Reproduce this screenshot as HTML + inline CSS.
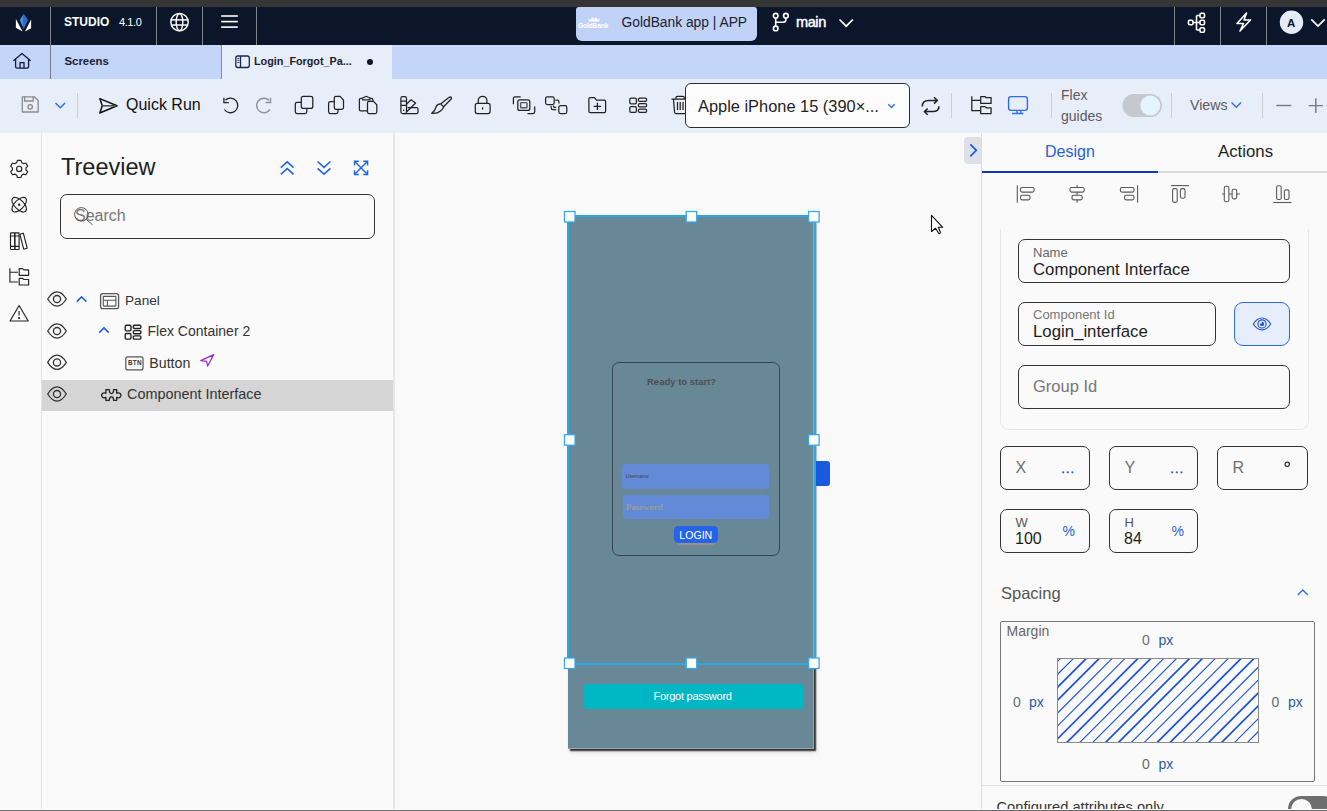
<!DOCTYPE html>
<html><head><meta charset="utf-8">
<style>
*{box-sizing:border-box;margin:0;padding:0}
html,body{width:1327px;height:811px;overflow:hidden;background:#fafafa;font-family:"Liberation Sans",sans-serif;color:#222}
.a{position:absolute}
svg{position:absolute;overflow:visible}
.t{position:absolute;white-space:nowrap;line-height:1}
</style></head><body>
<!-- browser strip -->
<div class="a" style="left:0;top:0;width:1327px;height:7px;background:#353535"></div>
<!-- nav -->
<div class="a" style="left:0;top:7px;width:1327px;height:38px;background:#0b162b"></div>
<!-- tabbar -->
<div class="a" style="left:0;top:45px;width:1327px;height:34px;background:#c3d5f8"></div>
<!-- toolbar -->
<div class="a" style="left:0;top:79px;width:1327px;height:54px;background:#e8edfa"></div>
<!-- left rail -->
<div class="a" style="left:0;top:133px;width:42px;height:677px;background:#fafafa;border-right:1px solid #e3e3e3"></div>
<!-- left panel -->
<div class="a" style="left:42px;top:133px;width:351px;height:677px;background:#fafafa"></div>
<div class="a" style="left:393px;top:133px;width:2px;height:677px;background:#e6e6e6"></div>
<!-- canvas -->
<div class="a" style="left:395px;top:133px;width:586px;height:677px;background:#f9f9fa"></div>
<!-- right panel -->
<div class="a" style="left:981px;top:133px;width:1px;height:677px;background:#dcdcdc"></div>
<div class="a" style="left:982px;top:133px;width:345px;height:677px;background:#fafafa"></div>
<!-- NAV -->
<svg width="1327" height="45" style="left:0;top:0">
  <g fill="#fff"><path d="M15.9 18.9 L15.9 27.8 L22.6 31.5 Z"/><path d="M31.1 19.6 L31.1 28.3 L25.0 31.5 Z"/></g>
  <path d="M23.7 13.7 L19.8 19.9 L23.7 28.9 Z" fill="#4b93dc"/>
  <path d="M23.7 13.7 L28.1 19.9 L23.7 28.9 Z" fill="#2c6cc2"/>
  <g stroke="#7d828b" stroke-width="1"><line x1="50.5" y1="7" x2="50.5" y2="45"/><line x1="156.5" y1="7" x2="156.5" y2="45"/><line x1="202.5" y1="7" x2="202.5" y2="45"/><line x1="256.5" y1="7" x2="256.5" y2="45"/><line x1="1174.5" y1="7" x2="1174.5" y2="45"/><line x1="1220.5" y1="7" x2="1220.5" y2="45"/><line x1="1266.5" y1="7" x2="1266.5" y2="45"/></g>
  <!-- globe -->
  <g fill="none" stroke="#fff" stroke-width="1.45"><circle cx="179.5" cy="22.1" r="8.7"/><ellipse cx="179.5" cy="22.1" rx="3.3" ry="8.7"/><line x1="171" y1="19.9" x2="188" y2="19.9"/><line x1="171" y1="25" x2="188" y2="25"/></g>
  <!-- hamburger -->
  <g stroke="#fff" stroke-width="1.6"><line x1="221.2" y1="16" x2="237.8" y2="16"/><line x1="221.2" y1="21.6" x2="237.8" y2="21.6"/><line x1="221.2" y1="27.1" x2="237.8" y2="27.1"/></g>
  <!-- branch icon -->
  <g fill="none" stroke="#fff" stroke-width="1.6"><circle cx="775.7" cy="15.7" r="2.3"/><circle cx="775.7" cy="28.4" r="2.3"/><circle cx="785.9" cy="15.7" r="2.3"/><line x1="775.7" y1="18" x2="775.7" y2="26.1"/><path d="M785.9 18 V19.5 Q785.9 22.3 783 22.3 H775.7"/></g>
  <!-- chevron main -->
  <path d="M839.5 19.5 L846.2 26.2 L852.9 19.5" fill="none" stroke="#fff" stroke-width="1.7"/>
  <!-- hierarchy -->
  <g fill="none" stroke="#fff" stroke-width="1.6"><rect x="1188.5" y="20.3" width="4.5" height="4.5" rx="1.2"/><rect x="1200" y="13.2" width="4.5" height="4.5" rx="1.2"/><rect x="1200" y="20.3" width="4.5" height="4.5" rx="1.2"/><rect x="1200" y="27.8" width="4.5" height="4.5" rx="1.2"/><path d="M1193 22.5 H1200 M1196.5 15.5 V30 M1196.5 15.5 H1200 M1196.5 30 H1200"/></g>
  <!-- lightning -->
  <path d="M1246.5 13 L1237 23.5 L1243.5 23.5 L1240 31 L1250.5 20 L1244 20 Z" fill="none" stroke="#fff" stroke-width="1.6" stroke-linejoin="round"/>
  <!-- avatar -->
  <circle cx="1291.5" cy="22.3" r="11.7" fill="#e6ebf8"/>
  <path d="M1311.3 19.3 L1318 26 L1324.7 19.3" fill="none" stroke="#fff" stroke-width="1.7"/>
</svg>
<div class="t" style="left:64px;top:16px;font-size:12px;font-weight:bold;color:#fff">STUDIO</div>
<div class="t" style="left:119px;top:16.5px;font-size:11px;color:#fff;letter-spacing:-0.4px">4.1.0</div>
<div class="a" style="left:576px;top:7px;width:181px;height:34px;background:#c0d2f6;border-radius:3px 3px 6px 6px"></div>
<div class="t" style="left:578px;top:22.8px;font-size:6.6px;font-weight:bold;color:#fff;letter-spacing:-0.1px">GoldBank</div>
<svg width="20" height="10" style="left:585px;top:16px"><path d="M3.2 2.5 L5.5 4 L7.5 1 L9 3.8 L10.5 1 L12.5 4 L14.8 2.5 L14 5.6 L4 5.6 Z" fill="#fff"/></svg>
<div class="t" style="left:621.5px;top:15.5px;font-size:13.8px;color:#1b2233">GoldBank app | APP</div>
<div class="t" style="left:796px;top:14.8px;font-size:14.6px;color:#fff;letter-spacing:-0.45px;-webkit-text-stroke:0.45px #fff">main</div>
<div class="t" style="left:1287px;top:17.5px;font-size:11.5px;font-weight:bold;color:#0b162b">A</div>
<!-- TABBAR -->
<div class="a" style="left:50px;top:45px;width:1px;height:34px;background:#767b85"></div>
<div class="a" style="left:221px;top:45px;width:1px;height:34px;background:#8a8f98"></div>
<div class="a" style="left:222px;top:45px;width:170px;height:34px;background:#e8edfa"></div>
<svg width="40" height="40" style="left:0;top:45px">
  <path d="M13.4 15.7 L22 8.4 L30.6 15.7 M15.6 14 V21.6 Q15.6 23.2 17.2 23.2 H27 Q28.6 23.2 28.6 21.6 V14 M20 23.2 V17.6 H24 V23.2" fill="none" stroke="#15193a" stroke-width="1.3" stroke-linejoin="round"/>
</svg>
<div class="t" style="left:64.5px;top:55.5px;font-size:11.4px;font-weight:bold;color:#1b2233">Screens</div>
<svg width="20" height="20" style="left:230px;top:50px">
  <rect x="5.8" y="6" width="13.5" height="11.5" rx="2" fill="none" stroke="#1b2550" stroke-width="1.3"/>
  <line x1="10.5" y1="6" x2="10.5" y2="17.5" stroke="#1b2550" stroke-width="1.3"/>
  <g stroke="#1b2550" stroke-width="0.9"><line x1="7.3" y1="8.5" x2="9.3" y2="8.5"/><line x1="7.3" y1="10.5" x2="9.3" y2="10.5"/><line x1="7.3" y1="12.5" x2="9.3" y2="12.5"/></g>
</svg>
<div class="t" style="left:254px;top:55.5px;font-size:10.8px;font-weight:bold;color:#1b2233">Login_Forgot_Pa...</div>
<div class="a" style="left:367px;top:59px;width:6px;height:6px;border-radius:50%;background:#0e1425"></div>
<!-- TOOLBAR -->
<svg width="1327" height="54" style="left:0;top:79px">
 <g transform="translate(0,-79)">
  <!-- save -->
  <path d="M22.3 96.8 H34.3 L38.2 100.5 V112 H22.3 Z" fill="none" stroke="#8a8a8a" stroke-width="1.3" stroke-linejoin="round"/>
  <path d="M24.6 96.8 V101 H33.2 V96.8" fill="none" stroke="#8a8a8a" stroke-width="1.3"/>
  <circle cx="30.2" cy="106.8" r="2.2" fill="none" stroke="#8a8a8a" stroke-width="1.3"/>
  <path d="M55.5 103 L60.3 107.8 L65 103" fill="none" stroke="#2f6fe0" stroke-width="1.5"/>
  <g stroke="#cbcdd2" stroke-width="1"><line x1="77.5" y1="93" x2="77.5" y2="118"/><line x1="951.5" y1="93" x2="951.5" y2="118"/><line x1="1051.5" y1="93" x2="1051.5" y2="118"/><line x1="1171.5" y1="93" x2="1171.5" y2="118"/><line x1="1262.5" y1="93" x2="1262.5" y2="118"/></g>
  <!-- send -->
  <path d="M99.8 98.6 L117 105.8 L99.8 113 L102.3 105.8 Z" fill="none" stroke="#111" stroke-width="1.5" stroke-linejoin="round"/>
  <line x1="102.3" y1="105.8" x2="116" y2="105.8" stroke="#555" stroke-width="1.6"/>
  <!-- undo -->
  <path d="M225.4 100.2 A7.3 7.3 0 1 1 224.4 109.5" fill="none" stroke="#222" stroke-width="1.3"/>
  <path d="M223.9 97.7 V102.6 H228.8" fill="none" stroke="#222" stroke-width="1.3"/>
  <!-- redo -->
  <path d="M269 100.2 A7.3 7.3 0 1 0 270 109.5" fill="none" stroke="#8f9296" stroke-width="1.5"/>
  <path d="M270.5 97.7 V102.6 H265.6" fill="none" stroke="#8f9296" stroke-width="1.5"/>
  <!-- copy1 -->
  <rect x="301.3" y="96.4" width="11.5" height="12" rx="2" fill="none" stroke="#222" stroke-width="1.25"/>
  <path d="M301.3 102.3 H297 Q295.3 102.3 295.3 104 V111.8 Q295.3 113.5 297 113.5 H305 Q306.8 113.5 306.8 111.8 V108.4" fill="none" stroke="#222" stroke-width="1.25"/>
  <!-- copy2 -->
  <path d="M336 96.4 H340 L343.5 100 V107.6 Q343.5 109.3 341.8 109.3 H336 Q334.3 109.3 334.3 107.6 V98.1 Q334.3 96.4 336 96.4 Z" fill="none" stroke="#222" stroke-width="1.25"/>
  <path d="M334.3 101.5 H330.3 Q328.6 101.5 328.6 103.2 V111.8 Q328.6 113.5 330.3 113.5 H336.3 Q338 113.5 338 111.8 V109.3" fill="none" stroke="#222" stroke-width="1.25"/>
  <!-- paste -->
  <path d="M362.5 98.4 H360.8 Q359.4 98.4 359.4 99.8 V109.5 Q359.4 110.9 360.8 110.9 H367.4 M370 98.4 H371.5 Q372.9 98.4 372.9 99.8 V101.4" fill="none" stroke="#222" stroke-width="1.25"/>
  <path d="M362.8 99.8 V97.8 L366.3 96.4 L369.8 97.8 V99.8 Z" fill="none" stroke="#222" stroke-width="1.2"/>
  <path d="M369 101.4 H373.5 L376.8 104.7 V112 Q376.8 113.5 375.3 113.5 H369 Q367.5 113.5 367.5 112 V102.9 Q367.5 101.4 369 101.4 Z" fill="none" stroke="#222" stroke-width="1.25"/>
  <!-- palette -->
  <rect x="400.9" y="96.5" width="5.6" height="17" rx="1.8" fill="none" stroke="#222" stroke-width="1.25"/>
  <path d="M400.9 101.2 H406.5 M400.9 105.3 H406.5" stroke="#222" stroke-width="1.2"/>
  <circle cx="403.7" cy="110.3" r="0.8" fill="#222"/>
  <path d="M406.5 104.2 L411 99.8 L415.6 103 L406.5 112" fill="none" stroke="#222" stroke-width="1.25" stroke-linejoin="round"/>
  <path d="M407.5 107.5 H416.6 Q418 107.5 418 109 V112.2 Q418 113.5 416.6 113.5 H403.7" fill="none" stroke="#222" stroke-width="1.25"/>
  <!-- brush -->
  <path d="M449.2 97.3 Q451.8 96.2 451.4 98.8 L443.6 106.8 L440.6 103.9 Z" fill="none" stroke="#222" stroke-width="1.25" stroke-linejoin="round"/>
  <path d="M440.6 103.9 Q437 104 436 107 Q435 111 431.7 113.3 Q437 113.8 440.5 111 Q443.5 108.8 443.6 106.8" fill="none" stroke="#222" stroke-width="1.25" stroke-linejoin="round"/>
  <!-- lock -->
  <rect x="475.3" y="103.4" width="14.8" height="10.2" rx="2" fill="none" stroke="#222" stroke-width="1.25"/>
  <path d="M478.3 103.4 V100.6 A4.3 4.3 0 0 1 486.9 100.6 V103.4" fill="none" stroke="#222" stroke-width="1.25"/>
  <line x1="482.6" y1="107.2" x2="482.6" y2="109.6" stroke="#222" stroke-width="1.25"/>
  <!-- group -->
  <path d="M513.4 104.3 V98.6 Q513.4 96.9 515.1 96.9 H520.7" fill="none" stroke="#222" stroke-width="1.25"/>
  <path d="M534.7 106.5 V111.8 Q534.7 113.5 533 113.5 H527.5" fill="none" stroke="#222" stroke-width="1.25"/>
  <rect x="517.8" y="99.9" width="12" height="10.5" rx="2" fill="none" stroke="#222" stroke-width="1.25"/>
  <rect x="520.6" y="102.6" width="6.4" height="5.2" rx="0.8" fill="none" stroke="#555" stroke-width="1.4"/>
  <!-- ungroup -->
  <rect x="545.6" y="96.9" width="8.6" height="7.6" rx="1.8" fill="none" stroke="#222" stroke-width="1.25"/>
  <rect x="558.8" y="105.6" width="8" height="8" rx="1.8" fill="none" stroke="#222" stroke-width="1.25"/>
  <path d="M555.4 100.2 H557.3 Q559 100.2 559 101.9 V103.6 M551.2 106 V108 Q551.2 109.7 552.9 109.7 H556.2 M553.5 105.6 V106.5 Q553.5 107.3 554.3 107.3 H556.2" fill="none" stroke="#222" stroke-width="1.2"/>
  <!-- folder+ -->
  <path d="M588.9 98.8 Q588.9 97.5 590.2 97.5 H594.6 L596.4 100.2 H604.3 Q605.6 100.2 605.6 101.5 V111.3 Q605.6 112.6 604.3 112.6 H590.2 Q588.9 112.6 588.9 111.3 Z" fill="none" stroke="#222" stroke-width="1.25" stroke-linejoin="round"/>
  <path d="M597.4 102.8 V110 M593.7 106.4 H601.1" stroke="#222" stroke-width="1.3"/>
  <!-- grid -->
  <g fill="none" stroke="#222" stroke-width="1.25">
   <rect x="629.8" y="98" width="6.6" height="5.8" rx="1.3"/><rect x="629.8" y="106.6" width="6.6" height="5.8" rx="1.3"/>
   <rect x="638.4" y="98" width="8.2" height="3.3" rx="1.3"/><rect x="638.4" y="103.6" width="8.2" height="3.3" rx="1.3"/><rect x="638.4" y="109.1" width="8.2" height="3.3" rx="1.3"/>
  </g>
  <!-- trash -->
  <path d="M671.5 99 H690 M676 99 V97.5 Q676 96.3 677.2 96.3 H683 Q684.2 96.3 684.2 97.5 V99 M673.5 99 L674.5 112 Q674.7 113.5 676.2 113.5 H686 M677.5 102 V110 M680.2 102 V110 M683 102 V110" fill="none" stroke="#222" stroke-width="1.25"/>
  <!-- refresh -->
  <path d="M922.3 106.5 Q922.3 100.4 928.5 100.4 H937.2 M934 97.3 L937.3 100.4 L934 103.6" fill="none" stroke="#222" stroke-width="1.5" stroke-linejoin="round"/>
  <path d="M939 106.2 Q939 111.6 932.8 111.6 H924.2 M927.7 108.5 L924.4 111.6 L927.7 114.7" fill="none" stroke="#222" stroke-width="1.5" stroke-linejoin="round"/>
  <!-- folder tree -->
  <path d="M971.8 96.2 V110.5 H980.2 M971.8 100.3 H980.2" fill="none" stroke="#222" stroke-width="1.25"/>
  <path d="M980.7 96.5 H985 L986.3 97.7 H991.1 V103.4 H980.7 Z M980.7 106.6 H985 L986.3 107.8 H991.1 V113.5 H980.7 Z" fill="none" stroke="#222" stroke-width="1.25" stroke-linejoin="round"/>
  <!-- monitor -->
  <rect x="1008.6" y="96.6" width="18.8" height="13.8" rx="2.6" fill="none" stroke="#2d6de6" stroke-width="1.4"/>
  <path d="M1017 110.4 V113.3 M1020.8 110.4 V113.3 M1012 113.5 H1023.4" stroke="#2d6de6" stroke-width="1.3"/>
  <!-- toggle -->
  <rect x="1122.5" y="94" width="39.5" height="23" rx="11.5" fill="#c5c8ce"/>
  <circle cx="1150.3" cy="105.5" r="10" fill="#e4f5fd"/>
  <!-- views chevron -->
  <path d="M1231.5 102.5 L1236.3 107.3 L1241 102.5" fill="none" stroke="#2f6fe0" stroke-width="1.4"/>
  <!-- minus / plus -->
  <path d="M1276.3 105.5 H1291.2" stroke="#777" stroke-width="1.4"/>
  <path d="M1308.6 105.6 H1323 M1315.8 98.3 V113" stroke="#777" stroke-width="1.4"/>
 </g>
</svg>
<div class="t" style="left:126px;top:96.5px;font-size:16px;color:#111">Quick Run</div>
<div class="a" style="left:685px;top:83px;width:225px;height:45px;background:#fcfcfd;border:1px solid #2c2c2c;border-radius:6px"></div>
<svg width="12" height="8" style="left:886px;top:102px"><path d="M2.3 2.3 L5.5 5.5 L8.7 2.3" fill="none" stroke="#2f6fe0" stroke-width="1.4"/></svg>
<div class="t" style="left:698px;top:98px;font-size:16.4px;color:#1f1f1f">Apple iPhone 15 (390×...</div>
<div class="t" style="left:1061px;top:85.2px;font-size:14px;line-height:20.6px;color:#5c5c5c">Flex<br>guides</div>
<div class="t" style="left:1190px;top:97.5px;font-size:14.2px;color:#5c5c5c">Views</div>
<!-- LEFT RAIL ICONS -->
<svg width="41" height="200" style="left:0;top:150px">
 <g transform="translate(0,-150)" fill="none" stroke="#222" stroke-width="1.15" stroke-linejoin="round">
  <path d="M17.4 160.3 H21 L21.7 162.6 L23.6 163.7 L25.9 163 L27.7 166.1 L26 167.8 V170 L27.7 171.7 L25.9 174.8 L23.6 174.1 L21.7 175.2 L21 177.5 H17.4 L16.7 175.2 L14.8 174.1 L12.5 174.8 L10.7 171.7 L12.4 170 V167.8 L10.7 166.1 L12.5 163 L14.8 163.7 L16.7 162.6 Z"/>
  <circle cx="19.2" cy="168.9" r="2.6"/>
  <ellipse cx="19.2" cy="204.7" rx="9.2" ry="4.6" transform="rotate(45 19.2 204.7)"/>
  <ellipse cx="19.2" cy="204.7" rx="9.2" ry="4.6" transform="rotate(-45 19.2 204.7)"/>
  <circle cx="19.2" cy="204.7" r="0.6" fill="#222"/>
  <rect x="10.5" y="232.8" width="4.3" height="16.7" rx="0.8"/><rect x="14.8" y="232.8" width="4.3" height="16.7" rx="0.8"/>
  <path d="M10.5 236 H19.1 M10.5 246.3 H19.1"/>
  <path d="M19.8 234.2 L23.3 233.2 L27.2 248.2 L23.7 249.2 Z"/>
  <path d="M9.9 268.3 V282 H17.9 M9.9 272.2 H17.9"/>
  <path d="M19.2 268.6 H22.5 L23.8 269.8 H28.6 V275.3 H19.2 Z M19.2 278.3 H22.5 L23.8 279.5 H28.6 V285 H19.2 Z"/>
  <path d="M19.1 305.5 L28.2 321 H10 Z"/>
  <path d="M19.1 311 V315.5"/>
  <circle cx="19.1" cy="318" r="0.5" fill="#222"/>
 </g>
</svg>
<div class="t" style="left:61px;top:156px;font-size:23.5px;color:#1e1e1e">Treeview</div>
<svg width="100" height="20" style="left:275px;top:158px">
 <g transform="translate(-275,-158)" fill="none" stroke="#2266dd" stroke-width="1.6">
  <path d="M280.8 167.6 L287.2 161.8 L293.6 167.6 M280.8 174.4 L287.2 168.6 L293.6 174.4"/>
  <path d="M317.6 161.5 L324 167.3 L330.4 161.5 M317.6 168.3 L324 174.1 L330.4 168.3"/>
  <path d="M354.5 161.3 L367.6 174.5 M367.6 161.3 L354.5 174.5 M354.5 165.6 V161.3 H358.8 M363.3 161.3 H367.6 V165.6 M367.6 170.2 V174.5 H363.3 M358.8 174.5 H354.5 V170.2" stroke-width="1.4"/>
 </g>
</svg>
<div class="a" style="left:60px;top:194px;width:315px;height:45px;border:1.3px solid #333;border-radius:7px"></div>
<div class="t" style="left:75px;top:208.2px;font-size:16px;color:#777">Search</div>
<svg width="30" height="30" style="left:70px;top:204px">
 <circle cx="11.4" cy="10.4" r="6.8" fill="none" stroke="#555" stroke-width="1"/>
 <line x1="16.3" y1="15.3" x2="22.6" y2="20.9" stroke="#555" stroke-width="1"/>
</svg>
<!-- highlight row -->
<div class="a" style="left:42px;top:380px;width:351px;height:30.6px;background:#d5d5d5"></div>
<svg width="351" height="130" style="left:42px;top:285px">
 <g transform="translate(-42,-285)" fill="none" stroke="#333" stroke-width="1.4">
  <g id="eye"><path d="M47.7 299 C50.6 294.4 53.6 291.9 57 291.9 C60.4 291.9 63.4 294.4 66.3 299 C63.4 303.6 60.4 306.1 57 306.1 C53.6 306.1 50.6 303.6 47.7 299 Z" stroke-width="1.3"/><circle cx="57" cy="299.1" r="3.6" stroke-width="1.3"/></g>
  <use href="#eye" transform="translate(0,32)"/>
  <use href="#eye" transform="translate(0,63.3)"/>
  <use href="#eye" transform="translate(0,95)"/>
  <path d="M76.8 301.6 L81.6 296.9 L86.4 301.6" stroke="#1f62e0" stroke-width="1.6"/>
  <path d="M99.2 332.6 L104 327.9 L108.8 332.6" stroke="#1f62e0" stroke-width="1.6"/>
  <rect x="100.6" y="293.7" width="18" height="15" rx="2.2" stroke="#555" stroke-width="1.3"/>
  <rect x="103.3" y="296.4" width="12.6" height="9.7" rx="0.6" stroke="#555" stroke-width="1.1"/>
  <path d="M103.3 300.3 H115.9 M107.4 300.3 V306.1" stroke="#555" stroke-width="1.1"/>
  <g stroke="#222" stroke-width="1.4">
   <rect x="125.2" y="325.3" width="5.8" height="5.6" rx="1.3"/><rect x="125.2" y="333.5" width="5.8" height="5.6" rx="1.3"/>
   <rect x="133.3" y="325.3" width="7.6" height="3.2" rx="1.2"/><rect x="133.3" y="330.6" width="7.6" height="3.2" rx="1.2"/><rect x="133.3" y="335.9" width="7.6" height="3.2" rx="1.2"/>
  </g>
  <rect x="125.8" y="356.9" width="17.2" height="13" rx="2" stroke="#555" stroke-width="1.2"/>
  <path d="M105.9 389.6 H109.3 C109.3 391.5 110.2 393.6 111.5 393.6 C112.8 393.6 113.6 391.5 113.6 389.6 H116.7 V393.3 C118.5 392.3 121 393 121 395.35 C121 397.7 118.5 398.4 116.7 397.4 V400.3 H113.6 C113.6 398.4 112.8 396.8 111.5 396.8 C110.2 396.8 109.3 398.4 109.3 400.3 H105.9 V397.4 C104.1 398.4 101.6 397.7 101.6 395.35 C101.6 393 104.1 392.3 105.9 393.3 Z" stroke="#222" stroke-width="1.3" stroke-linejoin="round"/>
  <path d="M213.6 354.6 L200.8 360.6 L206.6 361.4 L207.6 366.2 Z" stroke="#9b27d6" stroke-width="1.2" stroke-linejoin="round"/>
 </g>
</svg>
<div class="t" style="left:127.9px;top:360.4px;font-size:6.3px;font-weight:bold;color:#333;letter-spacing:0.35px">BTN</div>
<div class="t" style="left:125px;top:293.8px;font-size:13.6px;color:#333">Panel</div>
<div class="t" style="left:147.5px;top:324.3px;font-size:14px;color:#333">Flex Container 2</div>
<div class="t" style="left:149.3px;top:355.5px;font-size:14.2px;color:#333">Button</div>
<div class="t" style="left:127px;top:387.3px;font-size:14.4px;color:#333">Component Interface</div>
<!-- CANVAS -->
<div class="a" style="left:567.5px;top:215px;width:246.5px;height:534px;background:#688898;border-right:1px solid #94aab6;border-bottom:1px solid #94aab6;box-shadow:1.5px 1.5px 1.2px rgba(0,0,0,0.75),2px 2.5px 4px rgba(0,0,0,0.18)"></div>
<div class="a" style="left:583px;top:684px;width:221px;height:25.3px;background:#00b6c3;border-radius:4px"></div>
<div class="t" style="left:653.5px;top:690.6px;font-size:11px;color:#fff;letter-spacing:-0.25px">Forgot password</div>
<!-- login card -->
<div class="a" style="left:612px;top:362px;width:168px;height:194px;border:1px solid #3a4150;border-radius:7px"></div>
<div class="t" style="left:647px;top:377.2px;font-size:9.5px;font-weight:bold;color:#4d4f52">Ready to start?</div>
<div class="a" style="left:622px;top:463.7px;width:147.3px;height:25.2px;background:#638ad6;border-radius:4px"></div>
<div class="t" style="left:625.8px;top:473.8px;font-size:5px;color:#444">Username</div>
<div class="a" style="left:622.7px;top:495.2px;width:146.6px;height:24.3px;background:#638ad6;border-radius:4px"></div>
<div class="t" style="left:625.8px;top:502.8px;font-family:'Liberation Serif',serif;font-size:9px;font-weight:bold;color:#9d9d9d">Password</div>
<div class="a" style="left:676px;top:528px;width:40px;height:17px;background:#9a9285;border-radius:4.5px"></div><div class="a" style="left:674px;top:526.4px;width:44px;height:16.4px;background:#2563e8;border-radius:4.5px"></div>
<div class="t" style="left:679.3px;top:529.8px;font-size:10.6px;color:#fff">LOGIN</div>
<div class="a" style="left:816px;top:461px;width:14px;height:25px;background:#1a58dc;border-radius:0 3px 3px 0"></div>
<!-- selection -->
<div class="a" style="left:567px;top:215px;width:249px;height:450px;border:2px solid #29a8e0"></div>
<svg width="300" height="470" style="left:540px;top:200px">
 <g transform="translate(-540,-200)" fill="#fff" stroke="#3aa8e2" stroke-width="1.3">
  <rect x="564.5" y="211.5" width="10.5" height="10.5"/><rect x="686.2" y="211.5" width="10.5" height="10.5"/><rect x="808.6" y="211.5" width="10.5" height="10.5"/>
  <rect x="564.5" y="434.7" width="10.5" height="10.5"/><rect x="808.6" y="434.7" width="10.5" height="10.5"/>
  <rect x="564.5" y="658" width="10.5" height="10.5"/><rect x="686.2" y="658" width="10.5" height="10.5"/><rect x="808.6" y="658" width="10.5" height="10.5"/>
 </g>
</svg>
<!-- cursor -->
<svg width="20" height="24" style="left:925px;top:212px">
 <path d="M6.5 3.3 V19.5 L10.6 16.3 L13.6 21.3 Q14.2 22 15 21.3 L15.4 20.3 L13.3 15.3 H17.7 Z" fill="#fff" stroke="#111" stroke-width="1.1" stroke-linejoin="round"/>
</svg>
<!-- right panel collapse -->
<div class="a" style="left:964px;top:137px;width:17px;height:26.5px;background:#dde1e7;border-radius:4px 0 0 4px"></div>
<svg width="17" height="27" style="left:964px;top:137px"><path d="M6.3 7.3 L12.3 13.3 L6.3 19.3" fill="none" stroke="#1f5fd8" stroke-width="1.8"/></svg>
<!-- RIGHT PANEL -->
<div class="t" style="left:1045px;top:143.8px;font-size:16px;color:#2563d8">Design</div>
<div class="t" style="left:1218px;top:143.8px;font-size:16.8px;color:#1e1e1e">Actions</div>
<div class="a" style="left:982px;top:171px;width:345px;height:2px;background:#d9d9d9"></div>
<div class="a" style="left:982px;top:171px;width:176px;height:2px;background:#0b3bb2"></div>

<div class="a" style="left:999.5px;top:200px;width:309px;height:229.5px;border:1px solid #e6e6e6;border-top:none;border-radius:0 0 9px 9px"></div>
<div class="a" style="left:982px;top:173px;width:345px;height:56px;background:#fafafa"></div>
<!-- redraw align icons above cover -->
<svg width="345" height="30" style="left:982px;top:180px">
 <g transform="translate(-982,-180)" fill="none" stroke="#5a5a5a" stroke-width="1.1">
  <path d="M1017.3 185.3 V202.7"/><rect x="1020.5" y="187.5" width="13.6" height="4.6" rx="1.6"/><rect x="1020.5" y="195.3" width="9.5" height="4.6" rx="1.6"/>
  <path d="M1077.1 185.3 V187.5 M1077.1 192.1 V195.3 M1077.1 199.9 V202.7"/><rect x="1070" y="187.5" width="14.2" height="4.6" rx="1.6"/><rect x="1072" y="195.3" width="10.2" height="4.6" rx="1.6"/>
  <path d="M1137.6 185.3 V202.7"/><rect x="1120.4" y="187.5" width="13.6" height="4.6" rx="1.6"/><rect x="1124.5" y="195.3" width="9.5" height="4.6" rx="1.6"/>
  <path d="M1171 185.6 H1189"/><rect x="1172.6" y="188.6" width="4.6" height="13.8" rx="1.6"/><rect x="1180.4" y="188.6" width="4.6" height="9.6" rx="1.6"/>
  <path d="M1222 194 H1224.3 M1228.9 194 H1232.1 M1236.7 194 H1240"/><rect x="1224.3" y="186.3" width="4.6" height="15.4" rx="1.6"/><rect x="1232.1" y="189.3" width="4.6" height="9.6" rx="1.6"/>
  <path d="M1273.2 202.5 H1291.5"/><rect x="1276.6" y="185.7" width="4.6" height="13.8" rx="1.6"/><rect x="1284.4" y="189.9" width="4.6" height="9.6" rx="1.6"/>
 </g>
</svg>
<!-- inputs -->
<div class="a" style="left:1018px;top:238.8px;width:272px;height:44px;border:1.2px solid #333;border-radius:7px"></div>
<div class="t" style="left:1033px;top:245.8px;font-size:13px;color:#666">Name</div>
<div class="t" style="left:1033px;top:261.5px;font-size:16.8px;color:#1e1e1e">Component Interface</div>
<div class="a" style="left:1018px;top:301.8px;width:198px;height:44px;border:1.2px solid #333;border-radius:7px"></div>
<div class="t" style="left:1033px;top:308.2px;font-size:13px;color:#777">Component Id</div>
<div class="t" style="left:1033px;top:324.3px;font-size:16.8px;color:#1e1e1e">Login_interface</div>
<div class="a" style="left:1234px;top:301.5px;width:56px;height:44.6px;border:1.4px solid #2b6be6;border-radius:9px;background:#e6edfb"></div>
<svg width="24" height="16" style="left:1250px;top:316px">
 <path d="M3.3 8 C5.8 4 8.8 2 12 2 C15.2 2 18.2 4 20.7 8 C18.2 12 15.2 13.8 12 13.8 C8.8 13.8 5.8 12 3.3 8 Z" fill="none" stroke="#1f55c8" stroke-width="1.15"/>
 <circle cx="12" cy="7.9" r="4.1" fill="none" stroke="#1f55c8" stroke-width="1.15"/>
 <circle cx="12" cy="7.9" r="2.2" fill="#1f55c8"/>
 <circle cx="11" cy="6.9" r="0.9" fill="#e6edfb"/>
</svg>
<div class="a" style="left:1018px;top:364.8px;width:272px;height:44px;border:1.2px solid #333;border-radius:7px"></div>
<div class="t" style="left:1033px;top:378px;font-size:16.5px;color:#777">Group Id</div>
<!-- XYR -->
<div class="a" style="left:1000px;top:446.0px;width:90px;height:44px;border:1.2px solid #333;border-radius:7px"></div>
<div class="a" style="left:1109px;top:446.0px;width:89px;height:44px;border:1.2px solid #333;border-radius:7px"></div>
<div class="a" style="left:1217px;top:446.0px;width:90.5px;height:44px;border:1.2px solid #333;border-radius:7px"></div>
<div class="t" style="left:1015.5px;top:459.5px;font-size:16px;color:#707070">X</div>
<div class="t" style="left:1124.5px;top:459.5px;font-size:16px;color:#707070">Y</div>
<div class="t" style="left:1232.5px;top:459.5px;font-size:16px;color:#707070">R</div>
<svg width="300" height="20" style="left:1050px;top:455px">
 <g transform="translate(-1050,-455)" fill="#2563d8">
  <circle cx="1063.2" cy="472.3" r="1.1"/><circle cx="1067.8" cy="472.3" r="1.1"/><circle cx="1072.4" cy="472.3" r="1.1"/>
  <circle cx="1172.2" cy="472.3" r="1.1"/><circle cx="1176.8" cy="472.3" r="1.1"/><circle cx="1181.4" cy="472.3" r="1.1"/>
 </g>
 <circle cx="237.2" cy="9.3" r="2.2" fill="none" stroke="#333" stroke-width="1.2"/>
</svg>
<div class="a" style="left:1000px;top:508.8px;width:90px;height:44px;border:1.2px solid #333;border-radius:7px"></div>
<div class="a" style="left:1109px;top:508.8px;width:89px;height:44px;border:1.2px solid #333;border-radius:7px"></div>
<div class="t" style="left:1015.5px;top:516.2px;font-size:13px;color:#555">W</div>
<div class="t" style="left:1015px;top:530.5px;font-size:16px;color:#1e1e1e">100</div>
<div class="t" style="left:1062.5px;top:523.8px;font-size:14px;color:#2563d8">%</div>
<div class="t" style="left:1124.5px;top:516.2px;font-size:13px;color:#555">H</div>
<div class="t" style="left:1124px;top:530.5px;font-size:16px;color:#1e1e1e">84</div>
<div class="t" style="left:1171.5px;top:523.8px;font-size:14px;color:#2563d8">%</div>
<!-- spacing -->
<div class="t" style="left:1001px;top:585.2px;font-size:16.5px;color:#555">Spacing</div>
<svg width="14" height="10" style="left:1296px;top:587px"><path d="M1.8 8 L6.8 3 L11.8 8" fill="none" stroke="#2f6fe0" stroke-width="1.4"/></svg>
<div class="a" style="left:1000px;top:620.5px;width:315px;height:161px;border:1px solid #777;border-radius:2px"></div>
<div class="t" style="left:1006.5px;top:623.5px;font-size:14px;color:#666">Margin</div>
<div class="a" style="left:1057px;top:658px;width:202px;height:85px;border:1px solid #8a8a8a;background:#fafafa;overflow:hidden">
 <svg width="202" height="85" style="left:-1px;top:-1px"><g stroke="#1a50d4"><line x1="-6.90" y1="-2" x2="-97.90" y2="89" stroke-width="1.7"/><line x1="6.00" y1="-2" x2="-85.00" y2="89" stroke-width="1.1"/><line x1="18.90" y1="-2" x2="-72.10" y2="89" stroke-width="1.1"/><line x1="31.80" y1="-2" x2="-59.20" y2="89" stroke-width="1.7"/><line x1="44.70" y1="-2" x2="-46.30" y2="89" stroke-width="1.7"/><line x1="57.60" y1="-2" x2="-33.40" y2="89" stroke-width="1.1"/><line x1="70.50" y1="-2" x2="-20.50" y2="89" stroke-width="1.1"/><line x1="83.40" y1="-2" x2="-7.60" y2="89" stroke-width="1.7"/><line x1="96.30" y1="-2" x2="5.30" y2="89" stroke-width="1.7"/><line x1="109.20" y1="-2" x2="18.20" y2="89" stroke-width="1.1"/><line x1="122.10" y1="-2" x2="31.10" y2="89" stroke-width="1.1"/><line x1="135.00" y1="-2" x2="44.00" y2="89" stroke-width="1.7"/><line x1="147.90" y1="-2" x2="56.90" y2="89" stroke-width="1.7"/><line x1="160.80" y1="-2" x2="69.80" y2="89" stroke-width="1.1"/><line x1="173.70" y1="-2" x2="82.70" y2="89" stroke-width="1.1"/><line x1="186.60" y1="-2" x2="95.60" y2="89" stroke-width="1.7"/><line x1="199.50" y1="-2" x2="108.50" y2="89" stroke-width="1.7"/><line x1="212.40" y1="-2" x2="121.40" y2="89" stroke-width="1.1"/><line x1="225.30" y1="-2" x2="134.30" y2="89" stroke-width="1.1"/><line x1="238.20" y1="-2" x2="147.20" y2="89" stroke-width="1.7"/><line x1="251.10" y1="-2" x2="160.10" y2="89" stroke-width="1.7"/><line x1="264.00" y1="-2" x2="173.00" y2="89" stroke-width="1.1"/><line x1="276.90" y1="-2" x2="185.90" y2="89" stroke-width="1.1"/><line x1="289.80" y1="-2" x2="198.80" y2="89" stroke-width="1.7"/><line x1="302.70" y1="-2" x2="211.70" y2="89" stroke-width="1.7"/></g></svg>
</div>
<div class="t" style="left:1142px;top:633px;font-size:14px;color:#6a6a6a">0</div>
<div class="t" style="left:1158.5px;top:633px;font-size:14px;color:#2a5aa8">px</div>
<div class="t" style="left:1013px;top:694.5px;font-size:14px;color:#6a6a6a">0</div>
<div class="t" style="left:1029px;top:694.5px;font-size:14px;color:#2a5aa8">px</div>
<div class="t" style="left:1271.5px;top:694.5px;font-size:14px;color:#6a6a6a">0</div>
<div class="t" style="left:1288px;top:694.5px;font-size:14px;color:#2a5aa8">px</div>
<div class="t" style="left:1142px;top:756.5px;font-size:14px;color:#6a6a6a">0</div>
<div class="t" style="left:1158.5px;top:756.5px;font-size:14px;color:#2a5aa8">px</div>
<div class="a" style="left:982px;top:785px;width:345px;height:1px;background:#e2e2e2"></div>
<div class="t" style="left:996.5px;top:799.6px;font-size:14.7px;color:#333">Configured attributes only</div>
<div class="a" style="left:1288px;top:796px;width:48px;height:26px;border-radius:13px;background:#6e6e6e"></div>
<div class="a" style="left:1290.5px;top:798.5px;width:21px;height:21px;border-radius:50%;background:#fafafa"></div>

<!-- bottom line -->
<div class="a" style="left:0;top:809px;width:1327px;height:1px;background:#fff"></div>
<div class="a" style="left:0;top:810px;width:1327px;height:1px;background:#6b6b6b"></div>
</body></html>
